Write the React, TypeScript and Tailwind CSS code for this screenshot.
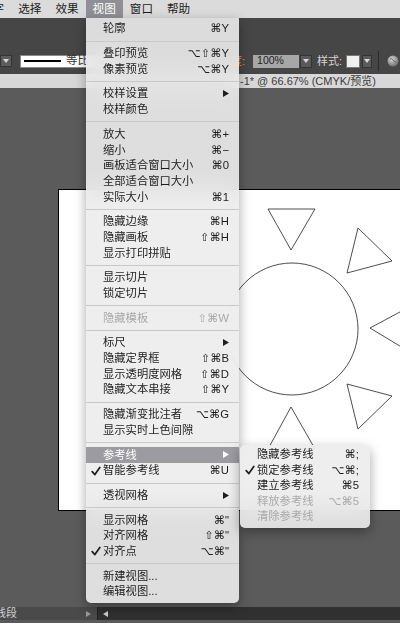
import React from 'react';

type MenuItem =
  | { sep: true }
  | {
      label: string;
      shortcut?: string;
      arrow?: boolean;
      check?: boolean;
      disabled?: boolean;
      active?: boolean;
    };

const barItems = ['文字', '选择', '效果', '视图', '窗口', '帮助'];

const viewMenu: MenuItem[] = [
  { label: '轮廓', shortcut: '⌘Y' },
  { sep: true },
  { label: '叠印预览', shortcut: '⌥⇧⌘Y' },
  { label: '像素预览', shortcut: '⌥⌘Y' },
  { sep: true },
  { label: '校样设置', arrow: true },
  { label: '校样颜色' },
  { sep: true },
  { label: '放大', shortcut: '⌘+' },
  { label: '缩小', shortcut: '⌘−' },
  { label: '画板适合窗口大小', shortcut: '⌘0' },
  { label: '全部适合窗口大小' },
  { label: '实际大小', shortcut: '⌘1' },
  { sep: true },
  { label: '隐藏边缘', shortcut: '⌘H' },
  { label: '隐藏画板', shortcut: '⇧⌘H' },
  { label: '显示打印拼贴' },
  { sep: true },
  { label: '显示切片' },
  { label: '锁定切片' },
  { sep: true },
  { label: '隐藏模板', shortcut: '⇧⌘W', disabled: true },
  { sep: true },
  { label: '标尺', arrow: true },
  { label: '隐藏定界框', shortcut: '⇧⌘B' },
  { label: '显示透明度网格', shortcut: '⇧⌘D' },
  { label: '隐藏文本串接', shortcut: '⇧⌘Y' },
  { sep: true },
  { label: '隐藏渐变批注者', shortcut: '⌥⌘G' },
  { label: '显示实时上色间隙' },
  { sep: true },
  { label: '参考线', arrow: true, active: true },
  { label: '智能参考线', shortcut: '⌘U', check: true },
  { sep: true },
  { label: '透视网格', arrow: true },
  { sep: true },
  { label: '显示网格', shortcut: '⌘"' },
  { label: '对齐网格', shortcut: '⇧⌘"' },
  { label: '对齐点', shortcut: '⌥⌘"', check: true },
  { sep: true },
  { label: '新建视图...' },
  { label: '编辑视图...' },
];

const guidesMenu: MenuItem[] = [
  { label: '隐藏参考线', shortcut: '⌘;' },
  { label: '锁定参考线', shortcut: '⌥⌘;', check: true },
  { label: '建立参考线', shortcut: '⌘5' },
  { label: '释放参考线', shortcut: '⌥⌘5', disabled: true },
  { label: '清除参考线', disabled: true },
];

const Check = () => (
  <svg width="10" height="10" viewBox="0 0 10 10">
    <path d="M1.2 5.6 L3.9 8.6 L8.8 1.4" fill="none" stroke="currentColor" strokeWidth="1.7" strokeLinecap="round" strokeLinejoin="round" />
  </svg>
);

const Arrow = () => (
  <svg width="6" height="7" viewBox="0 0 6 7">
    <polygon points="0,0 6,3.5 0,7" fill="currentColor" />
  </svg>
);

const Caret = () => (
  <svg width="6" height="4" viewBox="0 0 6 4">
    <polygon points="0,0 6,0 3,4" fill="#d8d8d8" />
  </svg>
);

function MenuRows({ items, rowH, textPl, checkPl, pr }: { items: MenuItem[]; rowH: string; textPl: string; checkPl: string; pr: string }) {
  return (
    <>
      {items.map((it, i) => {
        if ('sep' in it) {
          return (
            <div key={i} className="flex h-[9px] items-center">
              <div className="h-px w-full bg-[#c9c9c9]" />
            </div>
          );
        }
        const color = it.active ? 'text-white' : it.disabled ? 'text-[#a9a9a9]' : 'text-[#1e1e1e]';
        return (
          <div key={i} className={`flex ${rowH} items-center ${pr} ${color} ${it.active ? 'bg-[#9b9ba1]' : ''}`}>
            <div className={`flex ${textPl} shrink-0 items-center ${checkPl}`}>{it.check && <Check />}</div>
            <span className="flex-1 whitespace-nowrap">{it.label}</span>
            {it.shortcut && <span className="whitespace-nowrap">{it.shortcut}</span>}
            {it.arrow && <Arrow />}
          </div>
        );
      })}
    </>
  );
}

export default function App() {
  return (
    <div className="relative h-[623px] w-[400px] overflow-hidden bg-[#5b5b5b] font-['Liberation_Sans','DejaVu_Sans','Noto_Sans_CJK_SC',sans-serif]">
      {/* menu bar */}
      <div className="flex h-[18px] bg-[#dbdbdb] text-[11.6px] text-[#1b1b1b]">
        <div className="-ml-[26px] flex">
          {barItems.map((t) => (
            <div key={t} className={`flex items-center px-[7px] ${t === '视图' ? 'bg-[#8f8f95] text-white' : ''}`}>
              {t}
            </div>
          ))}
        </div>
      </div>

      {/* control bar */}
      <div className="h-[56px] bg-[#464646] pt-[36px]">
        <div className="flex h-[14px] items-center">
          <div className="flex h-[12px] w-[12px] items-center justify-center border border-[#333] bg-[#5c5c5c]">
            <Caret />
          </div>
          <div className="ml-[8px] flex h-[13px] w-[100px] shrink-0 items-center border border-[#8a8a8a] bg-white pl-[3px]">
            <div className="h-[1.5px] w-[37px] bg-black" />
            <span className="ml-[5px] text-[11.5px] text-[#333]">等比</span>
          </div>
          <span className="ml-[111px] text-[11px] text-[#e0963a]">度:</span>
          <div className="ml-[8px] flex h-[13px] w-[46px] items-center bg-[#a7a7a7] pl-[4px] text-[10.5px] text-[#1e1e1e]">100%</div>
          <div className="ml-[1px] flex h-[13px] w-[12px] items-center justify-center border border-[#333] bg-[#5a5a5a]">
            <Caret />
          </div>
          <span className="ml-[5px] text-[11px] text-[#d5d5d5]">样式:</span>
          <div className="ml-[4px] h-[13px] w-[14px] border border-[#777] bg-[#f0f0f0]" />
          <div className="ml-[1.5px] flex h-[13px] w-[10px] items-center justify-center border border-[#333] bg-[#5a5a5a]">
            <Caret />
          </div>
          <div className="ml-[6.5px] h-[20px] w-px bg-[#2c2c2c]" />
          <svg className="ml-[8px]" width="12" height="12" viewBox="0 0 12 12">
            <defs>
              <radialGradient id="globe" cx="40%" cy="35%" r="70%">
                <stop offset="0%" stopColor="#d8d8d8" />
                <stop offset="100%" stopColor="#6a6a6a" />
              </radialGradient>
            </defs>
            <circle cx="6" cy="6" r="5.5" fill="url(#globe)" />
            <path d="M3 4 Q5 3 6 5 T9 7" fill="none" stroke="#555" strokeWidth="0.8" />
          </svg>
        </div>
      </div>

      {/* document tab */}
      <div className="flex h-[14px] items-center bg-[#d8d8d8] pl-[240px] text-[11px] text-[#3c3c3c] whitespace-nowrap">
        -1* @ 66.67% (CMYK/预览)
      </div>

      {/* canvas */}
      <div className="h-[519px] overflow-hidden pl-[58px] pt-[101px]">
        <div className="h-[322px] w-[360px] border border-black bg-white">
          <svg width="360" height="320" viewBox="0 0 360 320">
            <g transform="translate(-59 -190)" fill="none" stroke="#3a3a3a" strokeWidth="0.9">
              <circle cx="292" cy="329" r="66" />
              <polygon points="268,209 315,209 291,250" />
              <polygon points="358,228 392,261 347,273" />
              <polygon points="370,328 413,305 413,354" />
              <polygon points="347,384 392,396 358,429" />
              <polygon points="291,407 268,449 315,449" />
            </g>
          </svg>
        </div>
      </div>

      {/* status bar */}
      <div className="flex h-[13px] bg-[#4a4a4a]">
        <div className="flex w-[97px] items-center">
          <span className="-ml-[5px] text-[11px] text-[#cfcfcf]">线段</span>
          <svg className="ml-auto mr-[6px]" width="5" height="6" viewBox="0 0 5 6">
            <polygon points="0,0 5,3 0,6" fill="#9a9a9a" />
          </svg>
        </div>
        <div className="flex flex-1 items-center border-l border-[#222] bg-[#303030] pl-[5px]">
          <svg width="5" height="6" viewBox="0 0 5 6">
            <polygon points="5,0 0,3 5,6" fill="#d0d0d0" />
          </svg>
        </div>
      </div>
      <div className="h-[3px] bg-[#5a5a5a]" />

      {/* view menu */}
      <div className="absolute left-[86px] top-[18px] w-[153px] rounded-b-[5px] bg-[rgba(236,236,236,0.9)] py-[3px] text-[11.3px] shadow-[0_4px_12px_rgba(0,0,0,0.35)] backdrop-blur-md">
        <MenuRows items={viewMenu} rowH="h-[15.7px]" textPl="w-[17px]" checkPl="pl-[4.5px]" pr="pr-[10px]" />
      </div>

      {/* guides submenu */}
      <div className="absolute left-[240px] top-[445px] w-[130px] rounded-[5px] bg-[rgba(236,236,236,0.9)] pb-[3px] pt-[2px] text-[11.3px] shadow-[0_4px_12px_rgba(0,0,0,0.35)] backdrop-blur-md">
        <MenuRows items={guidesMenu} rowH="h-[15.5px]" textPl="w-[17px]" checkPl="pl-[5px]" pr="pr-[11px]" />
      </div>
    </div>
  );
}
